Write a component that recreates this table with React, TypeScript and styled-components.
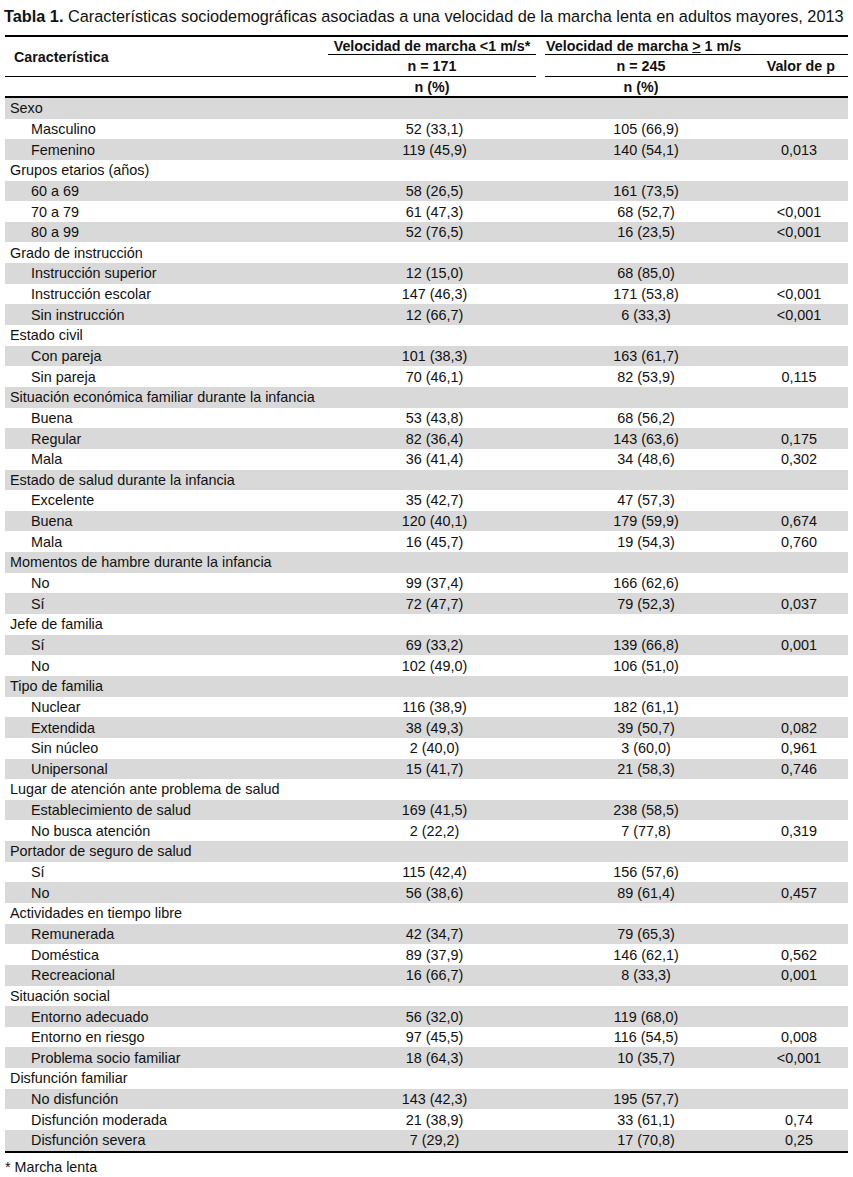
import React from "react";
import styled, { createGlobalStyle } from "styled-components";

const Global = createGlobalStyle`
  html, body { margin: 0; padding: 0; background: #fff; }
  body { font-family: "Liberation Sans", Arial, sans-serif; color: #111; }
`;

const COLS = "323px 208px 9px 192px 111px";

const Page = styled.div`
  width: 843px;
  padding-left: 5px;
`;

const Title = styled.div`
  height: 35px;
  line-height: 33px;
  font-size: 16.3px;
  margin-left: -1px;
  white-space: nowrap;
  b { font-weight: bold; }
`;

const Head = styled.div`
  display: grid;
  grid-template-columns: ${COLS};
  grid-template-rows: 18px 22px 19px;
  border-top: 2px solid #000;
  border-bottom: 2px solid #000;
  font-weight: bold;
  font-size: 14.3px;
`;

const HCell = styled.div<{ $col: string; $row: string; $align?: string; $line?: boolean; $pad?: string }>`
  grid-column: ${(p) => p.$col};
  grid-row: ${(p) => p.$row};
  display: flex;
  align-items: center;
  justify-content: ${(p) => p.$align || "center"};
  padding: ${(p) => p.$pad || "0"};
  border-bottom: ${(p) => (p.$line ? "1px solid #000" : "none")};
  white-space: nowrap;
`;

const Body = styled.div`
  border-bottom: 2px solid #000;
  font-size: 14.4px;
`;

const Row = styled.div<{ $shade: boolean }>`
  display: grid;
  grid-template-columns: ${COLS};
  height: 20.65px;
  align-items: center;
  background: ${(p) => (p.$shade ? "#d9d9d9" : "#fff")};
`;

const Label = styled.div<{ $sub?: boolean }>`
  padding-left: ${(p) => (p.$sub ? "26px" : "5px")};
  white-space: nowrap;
`;

const Val = styled.div<{ $col: string; $shift: number }>`
  grid-column: ${(p) => p.$col};
  text-align: center;
  padding-left: ${(p) => p.$shift}px;
  white-space: nowrap;
`;

const PVal = styled.div`
  grid-column: 5;
  text-align: center;
  padding-left: 13px;
`;

const Foot = styled.div`
  margin-top: 6px;
  font-size: 14.3px;
  line-height: 16px;
`;

type Item = [string, string, string, string];
type Group = { title: string; items: Item[] };

const groups: Group[] = [
  { title: "Sexo", items: [["Masculino", "52 (33,1)", "105 (66,9)", ""], ["Femenino", "119 (45,9)", "140 (54,1)", "0,013"]] },
  { title: "Grupos etarios (años)", items: [["60 a 69", "58 (26,5)", "161 (73,5)", ""], ["70 a 79", "61 (47,3)", "68 (52,7)", "<0,001"], ["80 a 99", "52 (76,5)", "16 (23,5)", "<0,001"]] },
  { title: "Grado de instrucción", items: [["Instrucción superior", "12 (15,0)", "68 (85,0)", ""], ["Instrucción escolar", "147 (46,3)", "171 (53,8)", "<0,001"], ["Sin instrucción", "12 (66,7)", "6 (33,3)", "<0,001"]] },
  { title: "Estado civil", items: [["Con pareja", "101 (38,3)", "163 (61,7)", ""], ["Sin pareja", "70 (46,1)", "82 (53,9)", "0,115"]] },
  { title: "Situación económica familiar durante la infancia", items: [["Buena", "53 (43,8)", "68 (56,2)", ""], ["Regular", "82 (36,4)", "143 (63,6)", "0,175"], ["Mala", "36 (41,4)", "34 (48,6)", "0,302"]] },
  { title: "Estado de salud durante la infancia", items: [["Excelente", "35 (42,7)", "47 (57,3)", ""], ["Buena", "120 (40,1)", "179 (59,9)", "0,674"], ["Mala", "16 (45,7)", "19 (54,3)", "0,760"]] },
  { title: "Momentos de hambre durante la infancia", items: [["No", "99 (37,4)", "166 (62,6)", ""], ["Sí", "72 (47,7)", "79 (52,3)", "0,037"]] },
  { title: "Jefe de familia", items: [["Sí", "69 (33,2)", "139 (66,8)", "0,001"], ["No", "102 (49,0)", "106 (51,0)", ""]] },
  { title: "Tipo de familia", items: [["Nuclear", "116 (38,9)", "182 (61,1)", ""], ["Extendida", "38 (49,3)", "39 (50,7)", "0,082"], ["Sin núcleo", "2 (40,0)", "3 (60,0)", "0,961"], ["Unipersonal", "15 (41,7)", "21 (58,3)", "0,746"]] },
  { title: "Lugar de atención ante problema de salud", items: [["Establecimiento de salud", "169 (41,5)", "238 (58,5)", ""], ["No busca atención", "2 (22,2)", "7 (77,8)", "0,319"]] },
  { title: "Portador de seguro de salud", items: [["Sí", "115 (42,4)", "156 (57,6)", ""], ["No", "56 (38,6)", "89 (61,4)", "0,457"]] },
  { title: "Actividades en tiempo libre", items: [["Remunerada", "42 (34,7)", "79 (65,3)", ""], ["Doméstica", "89 (37,9)", "146 (62,1)", "0,562"], ["Recreacional", "16 (66,7)", "8 (33,3)", "0,001"]] },
  { title: "Situación social", items: [["Entorno adecuado", "56 (32,0)", "119 (68,0)", ""], ["Entorno en riesgo", "97 (45,5)", "116 (54,5)", "0,008"], ["Problema socio familiar", "18 (64,3)", "10 (35,7)", "<0,001"]] },
  { title: "Disfunción familiar", items: [["No disfunción", "143 (42,3)", "195 (57,7)", ""], ["Disfunción moderada", "21 (38,9)", "33 (61,1)", "0,74"], ["Disfunción severa", "7 (29,2)", "17 (70,8)", "0,25"]] },
];

export default function App() {
  let idx = 0;
  const rows: React.ReactNode[] = [];
  groups.forEach((g) => {
    const s = idx % 2 === 0;
    rows.push(
      <Row key={`g${idx}`} $shade={s}>
        <Label>{g.title}</Label>
      </Row>
    );
    idx++;
    g.items.forEach((it) => {
      const sh = idx % 2 === 0;
      rows.push(
        <Row key={`r${idx}`} $shade={sh}>
          <Label $sub>{it[0]}</Label>
          <Val $col="2" $shift={5}>{it[1]}</Val>
          <Val $col="4" $shift={10}>{it[2]}</Val>
          <PVal>{it[3]}</PVal>
        </Row>
      );
      idx++;
    });
  });

  return (
    <Page>
      <Global />
      <Title>
        <b>Tabla 1.</b> Características sociodemográficas asociadas a una velocidad de la marcha lenta en adultos mayores, 2013
      </Title>
      <Head>
        <HCell $col="1" $row="1 / 3" $align="flex-start" $pad="0 0 0 9px" $line>
          Característica
        </HCell>
        <HCell $col="2" $row="1" $line>
          Velocidad de marcha &lt;1 m/s*
        </HCell>
        <HCell $col="4 / 6" $row="1" $align="flex-start" $pad="0 0 0 1px" $line>
          Velocidad de marcha&nbsp;<u>&gt;</u>&nbsp;1 m/s
        </HCell>
        <HCell $col="2" $row="2" $line>
          n = 171
        </HCell>
        <HCell $col="4" $row="2" $line>
          n = 245
        </HCell>
        <HCell $col="5" $row="2" $align="flex-end" $pad="0 13px 0 0" $line>
          Valor de p
        </HCell>
        <HCell $col="2" $row="3">n (%)</HCell>
        <HCell $col="4" $row="3">n (%)</HCell>
      </Head>
      <Body>{rows}</Body>
      <Foot>* Marcha lenta</Foot>
    </Page>
  );
}
